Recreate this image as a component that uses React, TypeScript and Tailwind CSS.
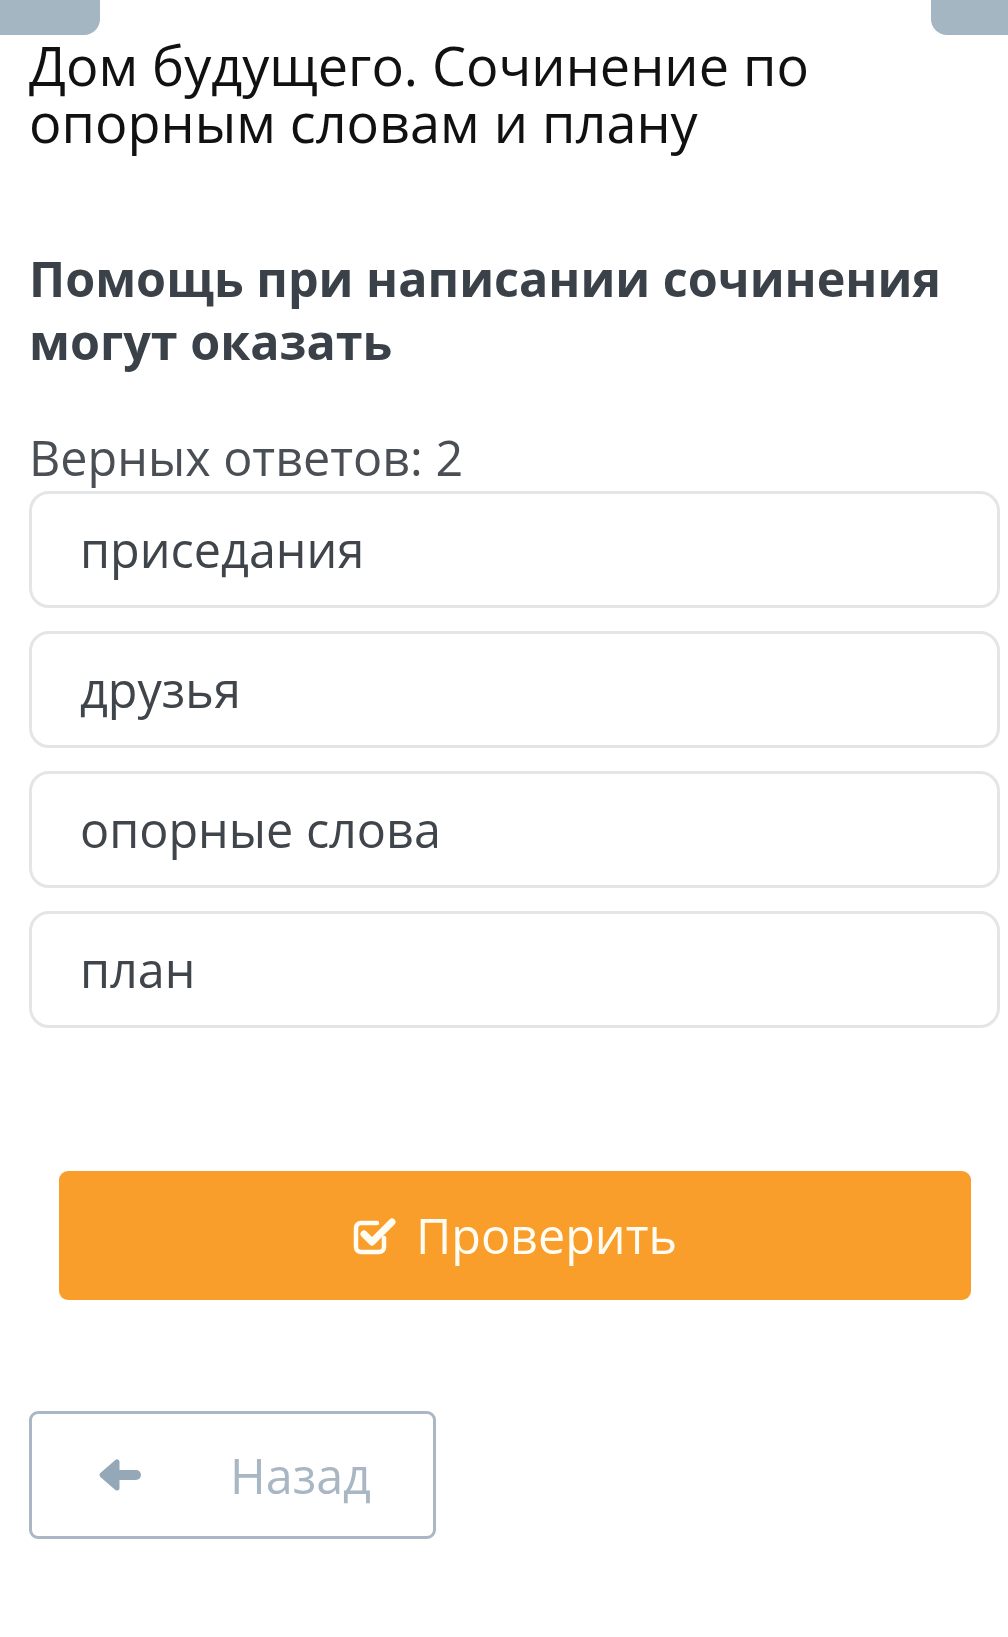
const OPTIONS = ["приседания", "друзья", "опорные слова", "план"];

export default function App() {
  return (
    <main className="min-h-[1637px] w-full bg-white font-['Open_Sans',sans-serif]">
      {/* верхние вкладки */}
      <div className="flex h-[35px] justify-between">
        <div className="w-[100px] rounded-br-[16px] bg-[#a5b6c3]" />
        <div className="w-[77px] rounded-bl-[16px] bg-[#a5b6c3]" />
      </div>

      <section className="pl-[29px] pr-[8px]">
        <h1 className="mt-[2px] text-[54px] leading-[57px] text-[#111111]">
          Дом будущего. Сочинение по опорным словам и плану
        </h1>
        <h2 className="mt-[96px] text-[48.5px] font-bold leading-[63px] text-[#3b4149]">
          Помощь при написании сочинения могут оказать
        </h2>
        <p className="mt-[56px] text-[48.5px] leading-[56px] text-[#4a4f56]">Верных ответов: 2</p>

        <div className="mt-[6px] flex flex-col gap-[23px]">
          {OPTIONS.map((o) => (
            <div
              key={o}
              className="flex h-[117px] items-center rounded-[20px] border-[3px] border-[#e3e5e7] pl-[48px] text-[48.5px] text-[#3f454b]"
            >
              {o}
            </div>
          ))}
        </div>
      </section>

      <button className="ml-[59px] mt-[143px] flex h-[129px] w-[912px] items-center justify-center gap-[18px] rounded-[9px] bg-[#f99d2b] text-[48.5px] text-[#fffdf3]">
        <CheckSquare />
        Проверить
      </button>

      <button className="ml-[29px] mt-[111px] flex h-[128px] w-[407px] items-center rounded-[9px] border-[3px] border-[#a9b8c4] pl-[66px] text-[48.5px] text-[#a8b7c3]">
        <ArrowLeft />
        <span className="ml-[88px]">Назад</span>
      </button>
    </main>
  );
}

function CheckSquare() {
  return (
    <svg width="45" height="40" viewBox="0 0 45 40" fill="none">
      <path
        d="M31 22v9a5 5 0 0 1-5 5H8a5 5 0 0 1-5-5V12a5 5 0 0 1 5-5h16"
        stroke="currentColor"
        strokeWidth="4.5"
        strokeLinecap="round"
      />
      <path
        d="M11 18l8 8L39 6"
        stroke="currentColor"
        strokeWidth="7"
        strokeLinecap="round"
        strokeLinejoin="round"
      />
    </svg>
  );
}

function ArrowLeft() {
  return (
    <svg width="44" height="34" viewBox="0 0 44 34" fill="#94a8b8">
      <path d="M4 17L19 4v26z" stroke="#94a8b8" strokeWidth="5" strokeLinejoin="round" />
      <rect x="14" y="12" width="29" height="10" rx="5" />
    </svg>
  );
}
